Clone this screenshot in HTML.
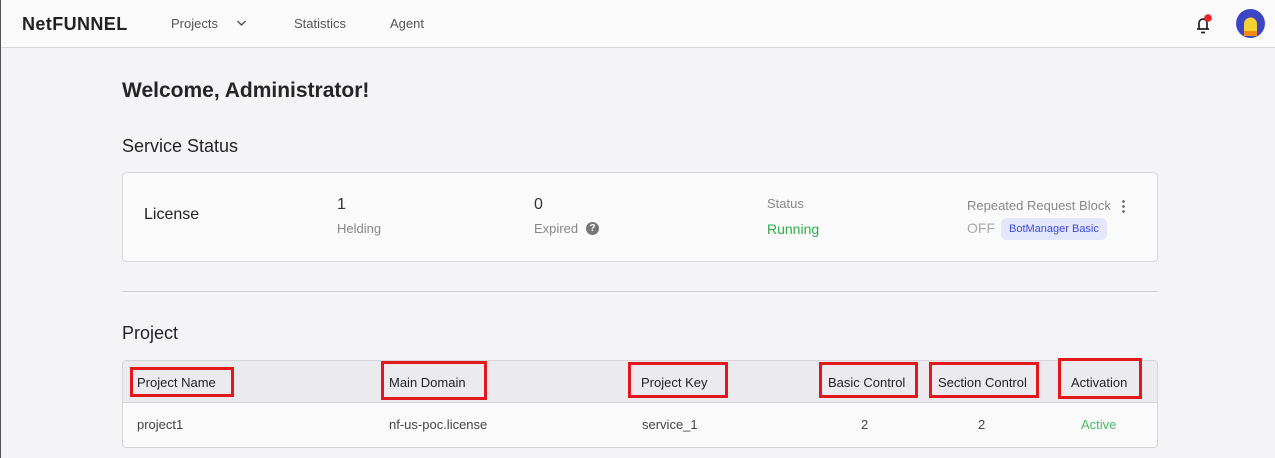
<!DOCTYPE html>
<html><head><meta charset="utf-8"><style>
*{margin:0;padding:0;box-sizing:border-box}
body{width:1275px;height:458px;overflow:hidden;background:#f4f4f6;font-family:"Liberation Sans",sans-serif;color:#222;position:relative}
.a{position:absolute;white-space:nowrap}
.hdr{position:absolute;left:0;top:0;width:1275px;height:48px;background:#fafafa;border-bottom:1px solid #d8d8dc}
.card{position:absolute;left:122px;top:172px;width:1036px;height:90px;background:#fafafa;border:1px solid #d6d6da;border-radius:4px}
.tbl{position:absolute;left:122px;top:360px;width:1036px;height:88px;background:#fafafa;border:1px solid #d6d6da;border-radius:4px;overflow:hidden}
.th{position:absolute;left:0;top:0;width:100%;height:42px;background:#ebebef;border-bottom:1px solid #d6d6da}
.rb{position:absolute;border:3px solid #e2181c}
.g{color:#888;font-size:13px}
.h{font-size:13px;color:#222}
.c{font-size:13px;color:#444}
</style></head><body>
<div class="hdr"></div>
<div class="a" style="left:0;top:0;width:1px;height:458px;background:#555"></div>
<div class="a" style="left:22px;top:14px;font-size:18px;font-weight:bold;color:#222;letter-spacing:0.4px">NetFUNNEL</div>
<div class="a" style="left:171px;top:16px;font-size:13px;color:#555">Projects</div>
<svg class="a" style="left:236px;top:19px" width="11" height="8" viewBox="0 0 11 8"><path d="M1.5 2l4 4 4-4" fill="none" stroke="#555" stroke-width="1.5"/></svg>
<div class="a" style="left:294px;top:16px;font-size:13px;color:#555">Statistics</div>
<div class="a" style="left:390px;top:16px;font-size:13px;color:#555">Agent</div>
<svg class="a" style="left:1194px;top:12px" width="20" height="24" viewBox="0 0 20 24"><path d="M3 17h12M5 17V11a4 4 0 0 1 8 0v6M7 20.5h4" fill="none" stroke="#222" stroke-width="1.7"/><circle cx="14" cy="6" r="3.8" fill="#e8202a"/></svg>
<svg class="a" style="left:1236px;top:9px" width="29" height="29" viewBox="0 0 29 29"><circle cx="14.5" cy="14.5" r="14.5" fill="#3c46c4"/><path d="M8 27V15a6.5 6.5 0 0 1 13 0v12z" fill="#f5d232"/><rect x="8" y="22" width="13" height="5" fill="#f58a14"/></svg>

<div class="a" style="left:122px;top:79px;font-size:21px;font-weight:bold;color:#252525">Welcome, Administrator!</div>
<div class="a" style="left:122px;top:136px;font-size:18px;color:#252525">Service Status</div>

<div class="card"></div>
<div class="a" style="left:144px;top:206px;font-size:16px;color:#222">License</div>
<div class="a" style="left:337px;top:196px;font-size:16px;color:#333">1</div>
<div class="a g" style="left:337px;top:221px">Helding</div>
<div class="a" style="left:534px;top:196px;font-size:16px;color:#333">0</div>
<div class="a g" style="left:534px;top:221px">Expired</div>
<div class="a" style="left:586px;top:222px;width:13px;height:13px;border-radius:50%;background:#777;color:#fff;font-size:10px;font-weight:bold;text-align:center;line-height:13px">?</div>
<div class="a g" style="left:767px;top:196px">Status</div>
<div class="a" style="left:767px;top:221px;font-size:14px;color:#2fae4a">Running</div>
<div class="a g" style="left:967px;top:198px">Repeated Request Block</div>
<div class="a" style="left:1122px;top:199px;width:3px;height:14px;background:radial-gradient(circle,#666 1.2px,transparent 1.5px) 0 0/3px 5px"></div>
<div class="a" style="left:967px;top:220px;font-size:14px;color:#aaa">OFF</div>
<div class="a" style="left:1001px;top:218px;height:22px;padding:0 8px;border-radius:6px;background:#e4e7fb;color:#3c4ad8;font-size:11px;line-height:22px">BotManager Basic</div>

<div class="a" style="left:122px;top:291px;width:1036px;height:1px;background:#d0d0d4"></div>
<div class="a" style="left:122px;top:323px;font-size:18px;color:#252525">Project</div>

<div class="tbl"><div class="th"></div></div>
<div class="a h" style="left:137px;top:375px">Project Name</div>
<div class="a h" style="left:389px;top:375px">Main Domain</div>
<div class="a h" style="left:641px;top:375px">Project Key</div>
<div class="a h" style="left:828px;top:375px">Basic Control</div>
<div class="a h" style="left:938px;top:375px">Section Control</div>
<div class="a h" style="left:1071px;top:375px">Activation</div>
<div class="rb" style="left:130px;top:367px;width:104px;height:30px"></div>
<div class="rb" style="left:381px;top:361px;width:106px;height:39px"></div>
<div class="rb" style="left:628px;top:362px;width:100px;height:36px"></div>
<div class="rb" style="left:819px;top:362px;width:99px;height:36px"></div>
<div class="rb" style="left:929px;top:362px;width:110px;height:36px"></div>
<div class="rb" style="left:1058px;top:358px;width:84px;height:41px"></div>
<div class="a c" style="left:137px;top:417px">project1</div>
<div class="a c" style="left:389px;top:417px">nf-us-poc.license</div>
<div class="a c" style="left:642px;top:417px">service_1</div>
<div class="a c" style="left:861px;top:417px">2</div>
<div class="a c" style="left:978px;top:417px">2</div>
<div class="a" style="left:1081px;top:417px;font-size:13px;color:#4cb86a">Active</div>
</body></html>
